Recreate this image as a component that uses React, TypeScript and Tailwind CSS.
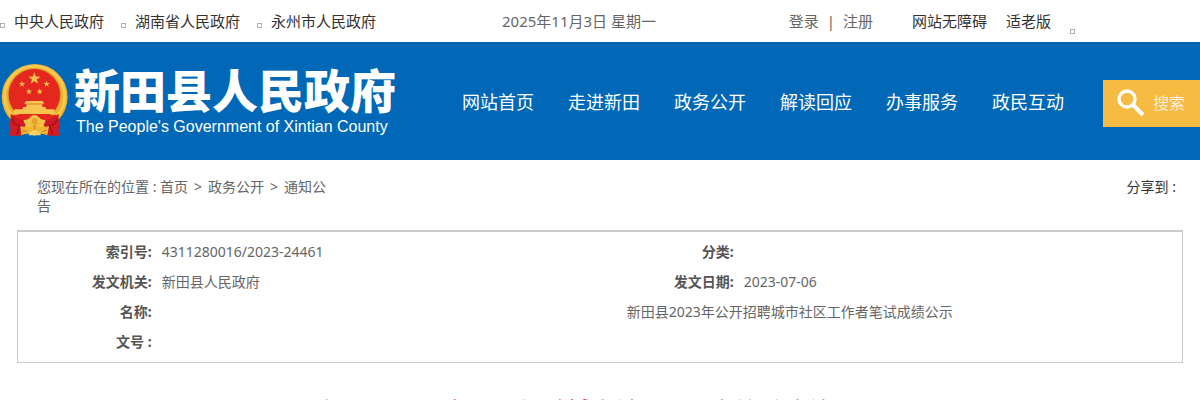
import React from "react";

// --- DATA ---
const upperLinks = ["中央人民政府", "湖南省人民政府", "永州市人民政府"];

const navItems = ["网站首页", "走进新田", "政务公开", "解读回应", "办事服务", "政民互动"];

const docTitle = "新田县2023年公开招聘城市社区工作者笔试成绩公示";

// --- ICONS ---
function Star({ x, y, r }: { x: number; y: number; r: number }) {
  const points = Array.from({ length: 10 }, (_, i) => {
    const radius = i % 2 === 0 ? r : r * 0.4;
    const angle = (Math.PI / 5) * i - Math.PI / 2;
    return `${x + radius * Math.cos(angle)},${y + radius * Math.sin(angle)}`;
  }).join(" ");
  return <polygon points={points} fill="#f3c04a" />;
}

function Emblem() {
  return (
    <svg viewBox="0 18 210 228" className="w-[70px] h-[76px] shrink-0" aria-hidden="true">
      <circle cx="104" cy="123" r="99" fill="#eeb02f" />
      <circle cx="104" cy="121" r="90" fill="none" stroke="#f5c850" strokeWidth="9" />
      <circle cx="103" cy="116" r="80" fill="#d99a26" />
      <circle cx="103" cy="116" r="77" fill="#e5281f" />
      <Star x={103} y={68} r={19} />
      <Star x={66} y={84} r={10} />
      <Star x={140} y={84} r={10} />
      <Star x={87} y={107} r={10} />
      <Star x={119} y={107} r={10} />
      <path d="M78 135h50l5 8H73zM79 145h48v8H79zM70 153h66l3 7H67zM44 160h118l4 14H39z" fill="#f6c650" />
      <path d="M36 177h134l-14 24H50z" fill="#e5281f" />
      <path d="M32 173q22 19 51 20l-21 46H28q6-19 1-34 5-14 3-32zM176 173q-22 19-51 20l21 46h32q-5-19 1-34-5-14-3-32z" fill="#d41922" />
      <path d="M36 188q5 21 24 21l-10 26M172 188q-5 21-24 21l10 26" fill="none" stroke="#98141c" strokeWidth="4" />
      <path d="M70 193q17-2 20-9 13-14 27 0 4 7 20 9l-5 12q-28-8-57 0z" fill="#f5c248" />
      <circle cx="104" cy="195" r="9" fill="#e6a12c" />
      <path d="M61 210q24 8 43-6 19 14 43 6l-5 28q-18-10-38 1-22-11-40-1z" fill="#efb635" />
      <path d="M91 228q13-11 27 0l5 10H86z" fill="#f8d36b" />
      <path d="M67 222l14 5M141 222l-14 5M104 207v14" stroke="#cf761d" strokeWidth="3" />
    </svg>
  );
}

function SearchIcon() {
  return (
    <svg viewBox="0 0 28 28" className="w-7 h-7" fill="none" stroke="#fff" aria-hidden="true">
      <circle cx="10" cy="10" r="8" strokeWidth="3.4" />
      <path d="M16 16l10 10" strokeWidth="4" />
    </svg>
  );
}

function Square() {
  return <span className="w-[5px] h-[5px] border border-[#b0b0b0] shrink-0" />;
}

// --- SECTIONS ---
function TopBar() {
  return (
    <div className="flex items-center h-[42px] pt-px text-[15px] text-[#333] whitespace-nowrap">
      <div className="flex flex-1 gap-[17px] max-w-[502px]">
        {upperLinks.map((label) => (
          <div key={label} className="flex items-center gap-[9px]">
            <span className="pt-2">
              <span className="flex"><Square /></span>
            </span>
            <a href="#">{label}</a>
          </div>
        ))}
      </div>
      <time className="text-[#666]">2025年11月3日 星期一</time>
      <div className="flex items-center ml-auto pr-[125px]">
        <div className="flex gap-2 text-[#666]">
          <a href="#">登录</a>
          <span>|</span>
          <a href="#">注册</a>
        </div>
        <a href="#" className="ml-[39px]">网站无障碍</a>
        <a href="#" className="ml-[19px]">适老版</a>
        <span className="ml-[19px] pt-5">
          <span className="flex"><Square /></span>
        </span>
      </div>
    </div>
  );
}

function Header() {
  return (
    <header className="flex items-center h-[118px] bg-[#0068b7] text-white whitespace-nowrap">
      <a href="#" className="flex items-center w-[462px] shrink-0 pb-0.5">
        <Emblem />
        <span className="flex flex-col ml-1">
          <span className="text-[46px] leading-[54px] font-black">新田县人民政府</span>
          <span className="pl-0.5 text-base leading-5 font-['Liberation_Sans',sans-serif]">
            The People's Government of Xintian County
          </span>
        </span>
      </a>
      <nav className="flex gap-[34px] pt-0.5 text-lg">
        {navItems.map((item) => (
          <a key={item} href="#">{item}</a>
        ))}
      </nav>
      <button className="flex items-center gap-2 h-[47px] ml-auto pl-[14px] pr-[15px] mt-1 bg-[#f6bb42] text-base font-light">
        <SearchIcon />
        搜索
      </button>
    </header>
  );
}

function Breadcrumb() {
  return (
    <div className="flex justify-between h-[70px] pt-[17px] pl-[37px] pr-6 text-sm leading-[19px]">
      <nav className="w-[295px] text-[#666]">
        您现在所在的位置 : <a href="#">首页</a>
        <span className="mx-1.5">&gt;</span>
        <a href="#">政务公开</a>
        <span className="mx-1.5">&gt;</span>
        <a href="#">通知公告</a>
      </nav>
      <span className="text-[#333]">分享到 :</span>
    </div>
  );
}

const labelClass = "w-[12%] h-[30px] pr-1.5 text-right font-bold text-[#555]";
const valueClass = "w-[38%] pl-1";

function DocInfo() {
  return (
    <div className="mx-[17px] py-[5px] border border-t-2 border-[#ccc]">
      <table className="w-full table-fixed text-sm leading-5 text-[#666]">
        <tbody>
          <tr>
            <th scope="row" className={labelClass}>索引号:</th>
            <td className={valueClass}>4311280016/2023-24461</td>
            <th scope="row" className={labelClass}>分类:</th>
            <td className={valueClass}></td>
          </tr>
          <tr>
            <th scope="row" className={labelClass}>发文机关:</th>
            <td className={valueClass}>新田县人民政府</td>
            <th scope="row" className={labelClass}>发文日期:</th>
            <td className={valueClass}>2023-07-06</td>
          </tr>
          <tr>
            <th scope="row" className={labelClass}>名称:</th>
            <td colSpan={3} className="pl-[240px] text-center">{docTitle}</td>
          </tr>
          <tr>
            <th scope="row" className={labelClass}>文号 :</th>
            <td colSpan={3}></td>
          </tr>
        </tbody>
      </table>
    </div>
  );
}

// --- APP ---
export default function App() {
  return (
    <div className="h-screen overflow-hidden bg-white font-['Noto_Sans','Noto_Sans_CJK_SC',sans-serif]">
      <TopBar />
      <Header />
      <main>
        <Breadcrumb />
        <DocInfo />
        <h1 className="mt-8 text-center text-2xl text-[#c8102e]">{docTitle}</h1>
      </main>
    </div>
  );
}
